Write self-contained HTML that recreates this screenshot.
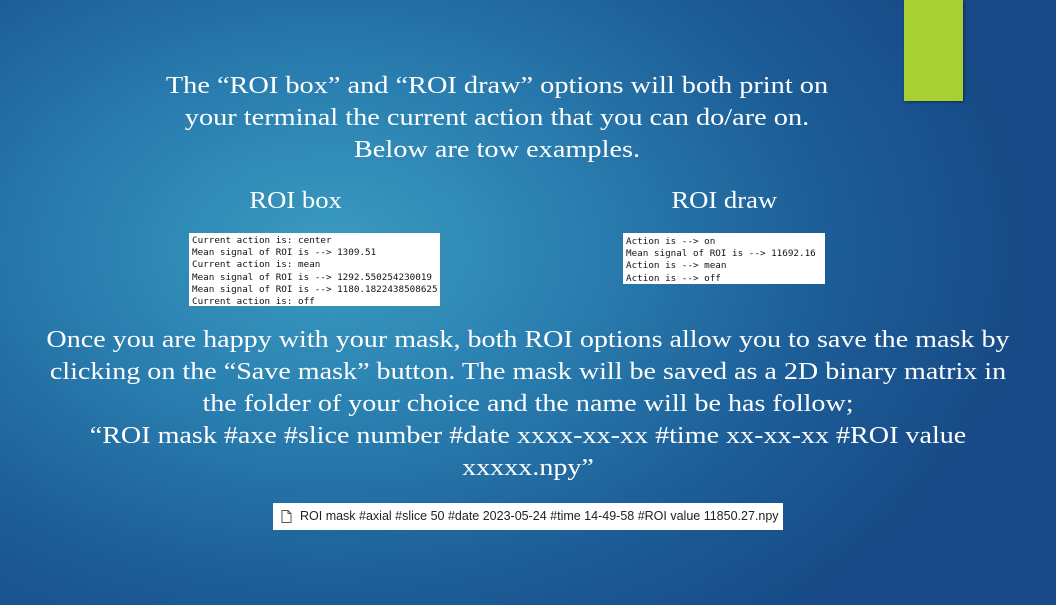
<!DOCTYPE html>
<html><head><style>
body{margin:0;width:1056px;height:605px;overflow:hidden;position:relative;
background:radial-gradient(ellipse 700px 480px at 330px 250px,#3a9cc0 0%,#2a7fb0 35%,#1d5e98 70%,#174a86 100%);
font-family:"Liberation Serif",serif;color:#fff}
.t{position:absolute;text-align:center;font-size:24px;line-height:32px;white-space:nowrap;transform-origin:center top}
.box{position:absolute;background:#fff;color:#111;font-family:"DejaVu Sans Mono","Liberation Mono",monospace;font-size:9px;line-height:12.2px;padding:2px 3px;box-sizing:border-box;overflow:hidden;white-space:nowrap}
.box span{display:inline-block;transform:scaleX(1.03);transform-origin:left}
</style></head><body>
<div style="position:absolute;left:904px;top:0;width:59px;height:101px;background:#a8d033;box-shadow:1px 1px 3px rgba(0,0,0,.4)"></div>
<div class="t" style="top:70px;left:0;width:994px;transform:scaleX(1.18)">The “ROI box” and “ROI draw” options will both print on<br>your terminal the current action that you can do/are on.<br>Below are tow examples.</div>
<div class="t" style="top:185px;left:249px;width:84px;transform:scaleX(1.11);transform-origin:left top">ROI box</div>
<div class="t" style="top:185px;left:671px;width:96px;transform:scaleX(1.11);transform-origin:left top">ROI draw</div>
<div class="box" style="left:189px;top:233px;width:251px;height:73px;padding-top:2px"><span>Current action is: center<br>Mean signal of ROI is --&gt; 1309.51<br>Current action is: mean<br>Mean signal of ROI is --&gt; 1292.550254230019<br>Mean signal of ROI is --&gt; 1180.1822438508625<br>Current action is: off</span></div>
<div class="box" style="left:623px;top:233px;width:202px;height:51px;padding-top:3px"><span>Action is --&gt; on<br>Mean signal of ROI is --&gt; 11692.16<br>Action is --&gt; mean<br>Action is --&gt; off</span></div>
<div class="t" style="top:324px;left:0;width:1056px;transform:scaleX(1.17)">Once you are happy with your mask, both ROI options allow you to save the mask by<br>clicking on the “Save mask” button. The mask will be saved as a 2D binary matrix in<br>the folder of your choice and the name will be has follow;<br>“ROI mask #axe #slice number #date xxxx-xx-xx #time xx-xx-xx #ROI value<br>xxxxx.npy”</div>
<div style="position:absolute;left:273px;top:503px;width:510px;height:27px;background:#fff;color:#222;font-family:'Liberation Sans',sans-serif;font-size:12.5px;line-height:27px;white-space:nowrap">
<svg style="position:absolute;left:8px;top:7px" width="11" height="13" viewBox="0 0 11 13"><path d="M1 .5h6l3 3v9H1z M7 .5v3h3" fill="none" stroke="#555" stroke-width="1"/></svg>
<span style="position:absolute;left:27px">ROI mask #axial #slice 50 #date 2023-05-24 #time 14-49-58 #ROI value 11850.27.npy</span></div>
</body></html>
